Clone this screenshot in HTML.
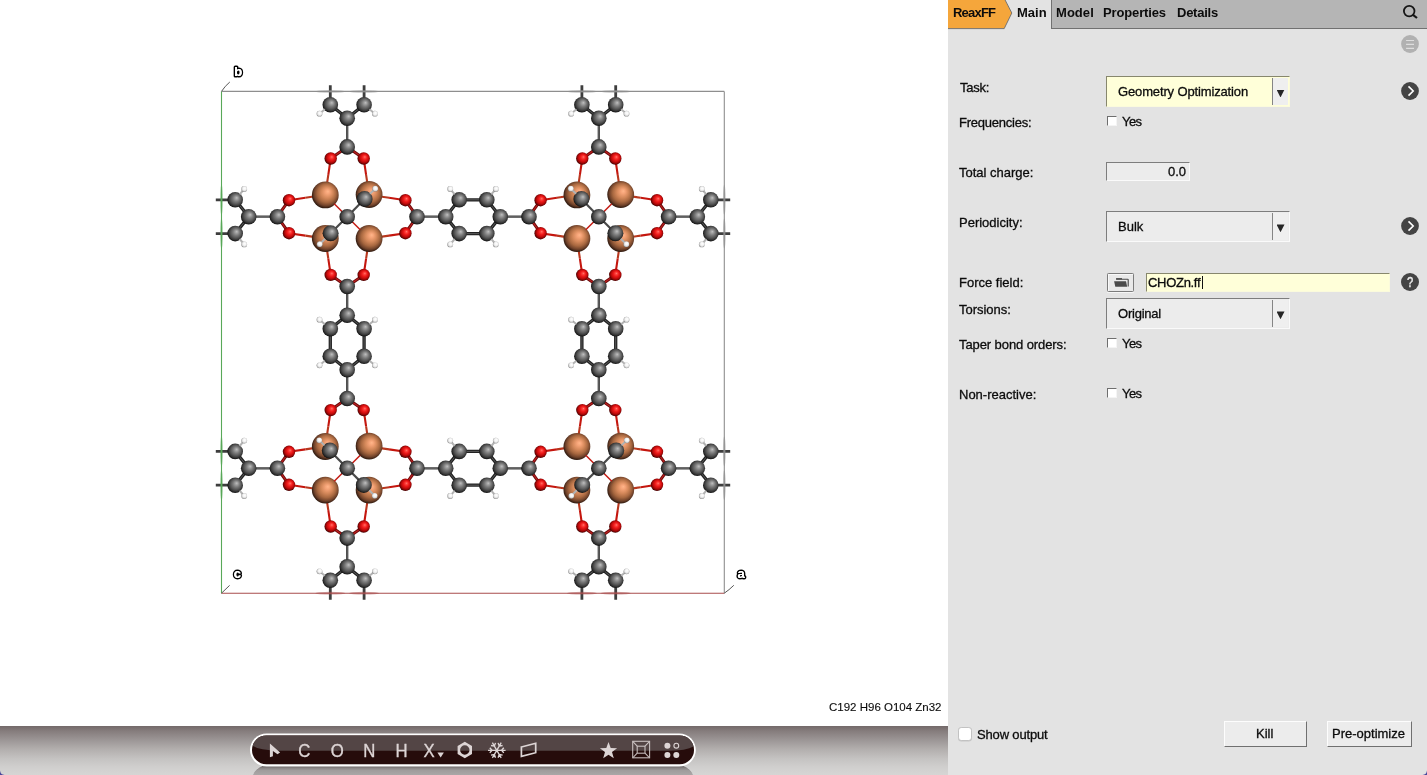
<!DOCTYPE html>
<html><head><meta charset="utf-8"><title>AMSinput</title>
<style>
*{box-sizing:border-box}
html,body{margin:0;padding:0}
body{width:1427px;height:775px;overflow:hidden;background:#fff;position:relative;font-family:"Liberation Sans",sans-serif;color:#111}
#viewer{position:absolute;left:0;top:0;width:948px;height:726px;background:#fff;overflow:hidden}
#bar{position:absolute;left:0;top:726px;width:948px;height:49px;background:linear-gradient(to bottom,#736969 0%,#857c7c 10%,#9b9595 28%,#b1adac 46%,#c4c2c1 66%,#d0cfce 84%,#d6d5d4 100%)}
#panel{position:absolute;left:948px;top:0;width:479px;height:775px;background:#e3e3e3}
.t{will-change:transform;position:absolute;white-space:nowrap;line-height:16px;height:16px;color:#0c0c0c}
.t{-webkit-text-stroke:0.3px #0c0c0c}
.b{font-weight:bold;-webkit-text-stroke:0}
.abs{position:absolute}
svg{will-change:transform}
.dd{position:absolute;border:1px solid;border-color:#7d7d7d #fafafa #fafafa #7d7d7d;background:#ececec}
.dd.y{background:#ffffd9;border-color:#87876d #fbfbdc #fbfbdc #87876d}
.dd .btn{position:absolute;right:1px;top:1px;bottom:1px;width:16px;background:#efefef;border-left:1px solid #858585}
.dd .btn:after{content:"";position:absolute;left:3.5px;top:11.3px;width:8px;height:7.8px;background:#262626;clip-path:polygon(0 0,100% 0,50% 100%)}
.cb{position:absolute;width:10px;height:10px;background:#fff;border:1px solid;border-color:#6e6e6e #f4f4f4 #f4f4f4 #6e6e6e}
.pb{position:absolute;background:#ececec;border:1px solid;border-color:#fdfdfd #707070 #707070 #fdfdfd}
</style></head>
<body>
<div id="viewer">
<svg width="948" height="726" viewBox="0 0 948 726" style="position:absolute;left:0;top:0">
<defs>
<radialGradient id="gZn" cx="0.525" cy="0.465" r="0.535" fx="0.60" fy="0.37"><stop offset="0" stop-color="#ffb68a"/><stop offset="0.15" stop-color="#f6a478"/><stop offset="0.4" stop-color="#d4885a"/><stop offset="0.65" stop-color="#a86840"/><stop offset="0.85" stop-color="#70422a"/><stop offset="1" stop-color="#2c180e"/></radialGradient>
<radialGradient id="gC" cx="0.525" cy="0.465" r="0.535" fx="0.60" fy="0.37"><stop offset="0" stop-color="#c0c0c0"/><stop offset="0.15" stop-color="#a4a4a4"/><stop offset="0.4" stop-color="#7a7a7a"/><stop offset="0.65" stop-color="#565656"/><stop offset="0.85" stop-color="#343434"/><stop offset="1" stop-color="#101010"/></radialGradient>
<radialGradient id="gO" cx="0.525" cy="0.465" r="0.535" fx="0.60" fy="0.37"><stop offset="0" stop-color="#ff7a74"/><stop offset="0.15" stop-color="#ff4640"/><stop offset="0.4" stop-color="#ee1a1a"/><stop offset="0.65" stop-color="#c60c0c"/><stop offset="0.85" stop-color="#8a0404"/><stop offset="1" stop-color="#3a0000"/></radialGradient>
<radialGradient id="gH" cx="0.525" cy="0.465" r="0.535" fx="0.60" fy="0.37"><stop offset="0" stop-color="#ffffff"/><stop offset="0.5" stop-color="#f4f4f4"/><stop offset="0.8" stop-color="#d0d0d0"/><stop offset="1" stop-color="#8a8a8a"/></radialGradient>
</defs>
<path d="M235.2 233.6L215.8 233.6M235.2 199.8L215.8 199.8M330.3 104.7L330.3 85.3M364.1 104.7L364.1 85.3M710.8 199.8L730.2 199.8M710.8 233.6L730.2 233.6M581.9 104.7L581.9 85.3M615.7 104.7L615.7 85.3M364.1 580.3L364.1 599.7M330.3 580.3L330.3 599.7M235.2 485.2L215.8 485.2M235.2 451.4L215.8 451.4M710.8 451.4L730.2 451.4M710.8 485.2L730.2 485.2M615.7 580.3L615.7 599.7M581.9 580.3L581.9 599.7" stroke="#3e3e3e" stroke-width="2.8" fill="none"/>
<g fill="none" stroke-width="1.1">
<path d="M221.5 91.4L724.3 91.4" stroke="#8e8e8e"/>
<path d="M724.3 91.4L724.3 593.2" stroke="#8e8e8e"/>
<path d="M221.5 91.4L221.5 593.2" stroke="#58a858"/>
<path d="M221.5 593.2L724.3 593.2" stroke="#a84c4c"/>
<ellipse cx="221.5" cy="233.6" rx="1.4" ry="15" fill="#58a858" opacity="0.5" stroke="none"/>
<ellipse cx="221.5" cy="199.8" rx="1.4" ry="15" fill="#58a858" opacity="0.5" stroke="none"/>
<ellipse cx="330.3" cy="91.4" rx="15" ry="1.4" fill="#8e8e8e" opacity="0.5" stroke="none"/>
<ellipse cx="364.1" cy="91.4" rx="15" ry="1.4" fill="#8e8e8e" opacity="0.5" stroke="none"/>
<ellipse cx="724.3" cy="199.8" rx="1.4" ry="15" fill="#8e8e8e" opacity="0.5" stroke="none"/>
<ellipse cx="724.3" cy="233.6" rx="1.4" ry="15" fill="#8e8e8e" opacity="0.5" stroke="none"/>
<ellipse cx="581.9" cy="91.4" rx="15" ry="1.4" fill="#8e8e8e" opacity="0.5" stroke="none"/>
<ellipse cx="615.7" cy="91.4" rx="15" ry="1.4" fill="#8e8e8e" opacity="0.5" stroke="none"/>
<ellipse cx="364.1" cy="593.2" rx="15" ry="1.4" fill="#a84c4c" opacity="0.5" stroke="none"/>
<ellipse cx="330.3" cy="593.2" rx="15" ry="1.4" fill="#a84c4c" opacity="0.5" stroke="none"/>
<ellipse cx="221.5" cy="485.2" rx="1.4" ry="15" fill="#58a858" opacity="0.5" stroke="none"/>
<ellipse cx="221.5" cy="451.4" rx="1.4" ry="15" fill="#58a858" opacity="0.5" stroke="none"/>
<ellipse cx="724.3" cy="451.4" rx="1.4" ry="15" fill="#8e8e8e" opacity="0.5" stroke="none"/>
<ellipse cx="724.3" cy="485.2" rx="1.4" ry="15" fill="#8e8e8e" opacity="0.5" stroke="none"/>
<ellipse cx="615.7" cy="593.2" rx="15" ry="1.4" fill="#a84c4c" opacity="0.5" stroke="none"/>
<ellipse cx="581.9" cy="593.2" rx="15" ry="1.4" fill="#a84c4c" opacity="0.5" stroke="none"/>
<path d="M221.5 91.4Q225 86 229.8 82M221.5 593.2L229.6 585.4M724.3 593.2Q729 590 733.8 585.3" stroke="#555" stroke-width="1"/>
</g>
<path d="M369.1 194.8L389.1 197.8M369.1 238.6L389.1 235.6M369.1 238.6L366.1 258.6M325.3 238.6L328.3 258.6M325.3 238.6L305.3 235.6M325.3 194.8L305.3 197.8M325.3 194.8L328.3 174.8M369.1 194.8L366.1 174.8M620.7 194.8L640.7 197.8M620.7 238.6L640.7 235.6M620.7 238.6L617.7 258.6M576.9 238.6L579.9 258.6M576.9 238.6L556.9 235.6M576.9 194.8L556.9 197.8M576.9 194.8L579.9 174.8M620.7 194.8L617.7 174.8M369.1 446.4L389.1 449.4M369.1 490.2L389.1 487.2M369.1 490.2L366.1 510.2M325.3 490.2L328.3 510.2M325.3 490.2L305.3 487.2M325.3 446.4L305.3 449.4M325.3 446.4L328.3 426.4M369.1 446.4L366.1 426.4M620.7 446.4L640.7 449.4M620.7 490.2L640.7 487.2M620.7 490.2L617.7 510.2M576.9 490.2L579.9 510.2M576.9 490.2L556.9 487.2M576.9 446.4L556.9 449.4M576.9 446.4L579.9 426.4M620.7 446.4L617.7 426.4" stroke="#b8381e" stroke-width="2.1" fill="none"/>
<path d="M389.1 197.8L405.4 200.2M389.1 235.6L405.4 233.2M366.1 258.6L363.7 274.9M328.3 258.6L330.7 274.9M305.3 235.6L289 233.2M305.3 197.8L289 200.2M328.3 174.8L330.7 158.5M366.1 174.8L363.7 158.5M640.7 197.8L657 200.2M640.7 235.6L657 233.2M617.7 258.6L615.3 274.9M579.9 258.6L582.3 274.9M556.9 235.6L540.6 233.2M556.9 197.8L540.6 200.2M579.9 174.8L582.3 158.5M617.7 174.8L615.3 158.5M389.1 449.4L405.4 451.8M389.1 487.2L405.4 484.8M366.1 510.2L363.7 526.5M328.3 510.2L330.7 526.5M305.3 487.2L289 484.8M305.3 449.4L289 451.8M328.3 426.4L330.7 410.1M366.1 426.4L363.7 410.1M640.7 449.4L657 451.8M640.7 487.2L657 484.8M617.7 510.2L615.3 526.5M579.9 510.2L582.3 526.5M556.9 487.2L540.6 484.8M556.9 449.4L540.6 451.8M579.9 426.4L582.3 410.1M617.7 426.4L615.3 410.1" stroke="#c4160e" stroke-width="2.1" fill="none"/>
<path d="M417 216.7L405.4 200.2M417 216.7L405.4 233.2M347.2 286.5L363.7 274.9M347.2 286.5L330.7 274.9M277.4 216.7L289 233.2M277.4 216.7L289 200.2M347.2 146.9L330.7 158.5M347.2 146.9L363.7 158.5M668.6 216.7L657 200.2M668.6 216.7L657 233.2M598.8 286.5L615.3 274.9M598.8 286.5L582.3 274.9M529 216.7L540.6 233.2M529 216.7L540.6 200.2M598.8 146.9L582.3 158.5M598.8 146.9L615.3 158.5M417 468.3L405.4 451.8M417 468.3L405.4 484.8M347.2 538.1L363.7 526.5M347.2 538.1L330.7 526.5M277.4 468.3L289 484.8M277.4 468.3L289 451.8M347.2 398.5L330.7 410.1M347.2 398.5L363.7 410.1M668.6 468.3L657 451.8M668.6 468.3L657 484.8M598.8 538.1L615.3 526.5M598.8 538.1L582.3 526.5M529 468.3L540.6 484.8M529 468.3L540.6 451.8M598.8 398.5L582.3 410.1M598.8 398.5L615.3 410.1" stroke="#6e0c0c" stroke-width="3" fill="none"/>
<path d="M417 216.7L405.4 200.2M417 216.7L405.4 233.2M347.2 286.5L363.7 274.9M347.2 286.5L330.7 274.9M277.4 216.7L289 233.2M277.4 216.7L289 200.2M347.2 146.9L330.7 158.5M347.2 146.9L363.7 158.5M668.6 216.7L657 200.2M668.6 216.7L657 233.2M598.8 286.5L615.3 274.9M598.8 286.5L582.3 274.9M529 216.7L540.6 233.2M529 216.7L540.6 200.2M598.8 146.9L582.3 158.5M598.8 146.9L615.3 158.5M417 468.3L405.4 451.8M417 468.3L405.4 484.8M347.2 538.1L363.7 526.5M347.2 538.1L330.7 526.5M277.4 468.3L289 484.8M277.4 468.3L289 451.8M347.2 398.5L330.7 410.1M347.2 398.5L363.7 410.1M668.6 468.3L657 451.8M668.6 468.3L657 484.8M598.8 538.1L615.3 526.5M598.8 538.1L582.3 526.5M529 468.3L540.6 484.8M529 468.3L540.6 451.8M598.8 398.5L582.3 410.1M598.8 398.5L615.3 410.1" stroke="#c02020" stroke-width="1.1" fill="none"/>
<path d="M417 216.7L445.7 216.7M347.2 286.5L347.2 315.2M277.4 216.7L248.7 216.7M347.2 146.9L347.2 118.2M668.6 216.7L697.3 216.7M598.8 286.5L598.8 315.2M529 216.7L500.3 216.7M598.8 146.9L598.8 118.2M417 468.3L445.7 468.3M347.2 538.1L347.2 566.8M277.4 468.3L248.7 468.3M347.2 398.5L347.2 369.8M668.6 468.3L697.3 468.3M598.8 538.1L598.8 566.8M529 468.3L500.3 468.3M598.8 398.5L598.8 369.8" stroke="#3c3c3c" stroke-width="2.3" fill="none"/>
<path d="M417 216.7L445.7 216.7M347.2 286.5L347.2 315.2M277.4 216.7L248.7 216.7M347.2 146.9L347.2 118.2M668.6 216.7L697.3 216.7M598.8 286.5L598.8 315.2M529 216.7L500.3 216.7M598.8 146.9L598.8 118.2M417 468.3L445.7 468.3M347.2 538.1L347.2 566.8M277.4 468.3L248.7 468.3M347.2 398.5L347.2 369.8M668.6 468.3L697.3 468.3M598.8 538.1L598.8 566.8M529 468.3L500.3 468.3M598.8 398.5L598.8 369.8" stroke="#6e6e6e" stroke-width="0.9" fill="none"/>
<path d="M445.7 216.7L459.2 199.8M445.7 216.7L459.2 233.6M459.2 199.8L486.8 199.8M459.2 233.6L486.8 233.6M347.2 315.2L364.1 328.7M347.2 315.2L330.3 328.7M364.1 328.7L364.1 356.3M330.3 328.7L330.3 356.3M248.7 216.7L235.2 233.6M248.7 216.7L235.2 199.8M347.2 118.2L330.3 104.7M347.2 118.2L364.1 104.7M697.3 216.7L710.8 199.8M697.3 216.7L710.8 233.6M598.8 315.2L615.7 328.7M598.8 315.2L581.9 328.7M615.7 328.7L615.7 356.3M581.9 328.7L581.9 356.3M500.3 216.7L486.8 233.6M500.3 216.7L486.8 199.8M598.8 118.2L581.9 104.7M598.8 118.2L615.7 104.7M445.7 468.3L459.2 451.4M445.7 468.3L459.2 485.2M459.2 451.4L486.8 451.4M459.2 485.2L486.8 485.2M347.2 566.8L364.1 580.3M347.2 566.8L330.3 580.3M248.7 468.3L235.2 485.2M248.7 468.3L235.2 451.4M347.2 369.8L330.3 356.3M347.2 369.8L364.1 356.3M697.3 468.3L710.8 451.4M697.3 468.3L710.8 485.2M598.8 566.8L615.7 580.3M598.8 566.8L581.9 580.3M500.3 468.3L486.8 485.2M500.3 468.3L486.8 451.4M598.8 369.8L581.9 356.3M598.8 369.8L615.7 356.3" stroke="#222222" stroke-width="3.3" fill="none"/>
<path d="M445.7 216.7L459.2 199.8M445.7 216.7L459.2 233.6M459.2 199.8L486.8 199.8M459.2 233.6L486.8 233.6M347.2 315.2L364.1 328.7M347.2 315.2L330.3 328.7M364.1 328.7L364.1 356.3M330.3 328.7L330.3 356.3M248.7 216.7L235.2 233.6M248.7 216.7L235.2 199.8M347.2 118.2L330.3 104.7M347.2 118.2L364.1 104.7M697.3 216.7L710.8 199.8M697.3 216.7L710.8 233.6M598.8 315.2L615.7 328.7M598.8 315.2L581.9 328.7M615.7 328.7L615.7 356.3M581.9 328.7L581.9 356.3M500.3 216.7L486.8 233.6M500.3 216.7L486.8 199.8M598.8 118.2L581.9 104.7M598.8 118.2L615.7 104.7M445.7 468.3L459.2 451.4M445.7 468.3L459.2 485.2M459.2 451.4L486.8 451.4M459.2 485.2L486.8 485.2M347.2 566.8L364.1 580.3M347.2 566.8L330.3 580.3M248.7 468.3L235.2 485.2M248.7 468.3L235.2 451.4M347.2 369.8L330.3 356.3M347.2 369.8L364.1 356.3M697.3 468.3L710.8 451.4M697.3 468.3L710.8 485.2M598.8 566.8L615.7 580.3M598.8 566.8L581.9 580.3M500.3 468.3L486.8 485.2M500.3 468.3L486.8 451.4M598.8 369.8L581.9 356.3M598.8 369.8L615.7 356.3" stroke="#5a5a5a" stroke-width="1" fill="none"/>
<circle cx="325.3" cy="194.9" r="13.4" fill="url(#gZn)"/>
<circle cx="369.1" cy="194.5" r="13.4" fill="url(#gZn)"/>
<circle cx="325.3" cy="238.5" r="13.4" fill="url(#gZn)"/>
<circle cx="369.1" cy="238.5" r="13.4" fill="url(#gZn)"/>
<circle cx="576.9" cy="194.9" r="13.4" fill="url(#gZn)"/>
<circle cx="620.7" cy="194.5" r="13.4" fill="url(#gZn)"/>
<circle cx="576.9" cy="238.5" r="13.4" fill="url(#gZn)"/>
<circle cx="620.7" cy="238.5" r="13.4" fill="url(#gZn)"/>
<circle cx="325.3" cy="446.5" r="13.4" fill="url(#gZn)"/>
<circle cx="369.1" cy="446.1" r="13.4" fill="url(#gZn)"/>
<circle cx="325.3" cy="490.1" r="13.4" fill="url(#gZn)"/>
<circle cx="369.1" cy="490.1" r="13.4" fill="url(#gZn)"/>
<circle cx="576.9" cy="446.5" r="13.4" fill="url(#gZn)"/>
<circle cx="620.7" cy="446.1" r="13.4" fill="url(#gZn)"/>
<circle cx="576.9" cy="490.1" r="13.4" fill="url(#gZn)"/>
<circle cx="620.7" cy="490.1" r="13.4" fill="url(#gZn)"/>
<circle cx="405.4" cy="200.2" r="6.2" fill="url(#gO)"/>
<circle cx="405.4" cy="233.2" r="6.2" fill="url(#gO)"/>
<circle cx="363.7" cy="274.9" r="6.2" fill="url(#gO)"/>
<circle cx="330.7" cy="274.9" r="6.2" fill="url(#gO)"/>
<circle cx="289" cy="233.2" r="6.2" fill="url(#gO)"/>
<circle cx="289" cy="200.2" r="6.2" fill="url(#gO)"/>
<circle cx="330.7" cy="158.5" r="6.2" fill="url(#gO)"/>
<circle cx="363.7" cy="158.5" r="6.2" fill="url(#gO)"/>
<circle cx="657" cy="200.2" r="6.2" fill="url(#gO)"/>
<circle cx="657" cy="233.2" r="6.2" fill="url(#gO)"/>
<circle cx="615.3" cy="274.9" r="6.2" fill="url(#gO)"/>
<circle cx="582.3" cy="274.9" r="6.2" fill="url(#gO)"/>
<circle cx="540.6" cy="233.2" r="6.2" fill="url(#gO)"/>
<circle cx="540.6" cy="200.2" r="6.2" fill="url(#gO)"/>
<circle cx="582.3" cy="158.5" r="6.2" fill="url(#gO)"/>
<circle cx="615.3" cy="158.5" r="6.2" fill="url(#gO)"/>
<circle cx="405.4" cy="451.8" r="6.2" fill="url(#gO)"/>
<circle cx="405.4" cy="484.8" r="6.2" fill="url(#gO)"/>
<circle cx="363.7" cy="526.5" r="6.2" fill="url(#gO)"/>
<circle cx="330.7" cy="526.5" r="6.2" fill="url(#gO)"/>
<circle cx="289" cy="484.8" r="6.2" fill="url(#gO)"/>
<circle cx="289" cy="451.8" r="6.2" fill="url(#gO)"/>
<circle cx="330.7" cy="410.1" r="6.2" fill="url(#gO)"/>
<circle cx="363.7" cy="410.1" r="6.2" fill="url(#gO)"/>
<circle cx="657" cy="451.8" r="6.2" fill="url(#gO)"/>
<circle cx="657" cy="484.8" r="6.2" fill="url(#gO)"/>
<circle cx="615.3" cy="526.5" r="6.2" fill="url(#gO)"/>
<circle cx="582.3" cy="526.5" r="6.2" fill="url(#gO)"/>
<circle cx="540.6" cy="484.8" r="6.2" fill="url(#gO)"/>
<circle cx="540.6" cy="451.8" r="6.2" fill="url(#gO)"/>
<circle cx="582.3" cy="410.1" r="6.2" fill="url(#gO)"/>
<circle cx="615.3" cy="410.1" r="6.2" fill="url(#gO)"/>
<circle cx="417" cy="216.7" r="7.8" fill="url(#gC)"/>
<circle cx="445.7" cy="216.7" r="7.8" fill="url(#gC)"/>
<circle cx="459.2" cy="199.8" r="7.8" fill="url(#gC)"/>
<circle cx="459.2" cy="233.6" r="7.8" fill="url(#gC)"/>
<circle cx="347.2" cy="286.5" r="7.8" fill="url(#gC)"/>
<circle cx="347.2" cy="315.2" r="7.8" fill="url(#gC)"/>
<circle cx="364.1" cy="328.7" r="7.8" fill="url(#gC)"/>
<circle cx="330.3" cy="328.7" r="7.8" fill="url(#gC)"/>
<circle cx="277.4" cy="216.7" r="7.8" fill="url(#gC)"/>
<circle cx="248.7" cy="216.7" r="7.8" fill="url(#gC)"/>
<circle cx="235.2" cy="233.6" r="7.8" fill="url(#gC)"/>
<circle cx="235.2" cy="199.8" r="7.8" fill="url(#gC)"/>
<circle cx="347.2" cy="146.9" r="7.8" fill="url(#gC)"/>
<circle cx="347.2" cy="118.2" r="7.8" fill="url(#gC)"/>
<circle cx="330.3" cy="104.7" r="7.8" fill="url(#gC)"/>
<circle cx="364.1" cy="104.7" r="7.8" fill="url(#gC)"/>
<circle cx="668.6" cy="216.7" r="7.8" fill="url(#gC)"/>
<circle cx="697.3" cy="216.7" r="7.8" fill="url(#gC)"/>
<circle cx="710.8" cy="199.8" r="7.8" fill="url(#gC)"/>
<circle cx="710.8" cy="233.6" r="7.8" fill="url(#gC)"/>
<circle cx="598.8" cy="286.5" r="7.8" fill="url(#gC)"/>
<circle cx="598.8" cy="315.2" r="7.8" fill="url(#gC)"/>
<circle cx="615.7" cy="328.7" r="7.8" fill="url(#gC)"/>
<circle cx="581.9" cy="328.7" r="7.8" fill="url(#gC)"/>
<circle cx="529" cy="216.7" r="7.8" fill="url(#gC)"/>
<circle cx="500.3" cy="216.7" r="7.8" fill="url(#gC)"/>
<circle cx="486.8" cy="233.6" r="7.8" fill="url(#gC)"/>
<circle cx="486.8" cy="199.8" r="7.8" fill="url(#gC)"/>
<circle cx="598.8" cy="146.9" r="7.8" fill="url(#gC)"/>
<circle cx="598.8" cy="118.2" r="7.8" fill="url(#gC)"/>
<circle cx="581.9" cy="104.7" r="7.8" fill="url(#gC)"/>
<circle cx="615.7" cy="104.7" r="7.8" fill="url(#gC)"/>
<circle cx="417" cy="468.3" r="7.8" fill="url(#gC)"/>
<circle cx="445.7" cy="468.3" r="7.8" fill="url(#gC)"/>
<circle cx="459.2" cy="451.4" r="7.8" fill="url(#gC)"/>
<circle cx="459.2" cy="485.2" r="7.8" fill="url(#gC)"/>
<circle cx="347.2" cy="538.1" r="7.8" fill="url(#gC)"/>
<circle cx="347.2" cy="566.8" r="7.8" fill="url(#gC)"/>
<circle cx="364.1" cy="580.3" r="7.8" fill="url(#gC)"/>
<circle cx="330.3" cy="580.3" r="7.8" fill="url(#gC)"/>
<circle cx="277.4" cy="468.3" r="7.8" fill="url(#gC)"/>
<circle cx="248.7" cy="468.3" r="7.8" fill="url(#gC)"/>
<circle cx="235.2" cy="485.2" r="7.8" fill="url(#gC)"/>
<circle cx="235.2" cy="451.4" r="7.8" fill="url(#gC)"/>
<circle cx="347.2" cy="398.5" r="7.8" fill="url(#gC)"/>
<circle cx="347.2" cy="369.8" r="7.8" fill="url(#gC)"/>
<circle cx="330.3" cy="356.3" r="7.8" fill="url(#gC)"/>
<circle cx="364.1" cy="356.3" r="7.8" fill="url(#gC)"/>
<circle cx="668.6" cy="468.3" r="7.8" fill="url(#gC)"/>
<circle cx="697.3" cy="468.3" r="7.8" fill="url(#gC)"/>
<circle cx="710.8" cy="451.4" r="7.8" fill="url(#gC)"/>
<circle cx="710.8" cy="485.2" r="7.8" fill="url(#gC)"/>
<circle cx="598.8" cy="538.1" r="7.8" fill="url(#gC)"/>
<circle cx="598.8" cy="566.8" r="7.8" fill="url(#gC)"/>
<circle cx="615.7" cy="580.3" r="7.8" fill="url(#gC)"/>
<circle cx="581.9" cy="580.3" r="7.8" fill="url(#gC)"/>
<circle cx="529" cy="468.3" r="7.8" fill="url(#gC)"/>
<circle cx="500.3" cy="468.3" r="7.8" fill="url(#gC)"/>
<circle cx="486.8" cy="485.2" r="7.8" fill="url(#gC)"/>
<circle cx="486.8" cy="451.4" r="7.8" fill="url(#gC)"/>
<circle cx="598.8" cy="398.5" r="7.8" fill="url(#gC)"/>
<circle cx="598.8" cy="369.8" r="7.8" fill="url(#gC)"/>
<circle cx="581.9" cy="356.3" r="7.8" fill="url(#gC)"/>
<circle cx="615.7" cy="356.3" r="7.8" fill="url(#gC)"/>
<path d="M454.7 194.4L450.2 189" stroke="#b2b2b2" stroke-width="2"/>
<path d="M454.7 239L450.2 244.4" stroke="#b2b2b2" stroke-width="2"/>
<circle cx="450.2" cy="189" r="2.9" fill="url(#gH)"/>
<circle cx="450.2" cy="244.4" r="2.9" fill="url(#gH)"/>
<path d="M369.5 324.2L374.9 319.7" stroke="#b2b2b2" stroke-width="2"/>
<path d="M324.9 324.2L319.5 319.7" stroke="#b2b2b2" stroke-width="2"/>
<circle cx="374.9" cy="319.7" r="2.9" fill="url(#gH)"/>
<circle cx="319.5" cy="319.7" r="2.9" fill="url(#gH)"/>
<path d="M239.7 239L244.2 244.4" stroke="#b2b2b2" stroke-width="2"/>
<path d="M239.7 194.4L244.2 189" stroke="#b2b2b2" stroke-width="2"/>
<circle cx="244.2" cy="244.4" r="2.9" fill="url(#gH)"/>
<circle cx="244.2" cy="189" r="2.9" fill="url(#gH)"/>
<path d="M324.9 109.2L319.5 113.7" stroke="#b2b2b2" stroke-width="2"/>
<path d="M369.5 109.2L374.9 113.7" stroke="#b2b2b2" stroke-width="2"/>
<circle cx="319.5" cy="113.7" r="2.9" fill="url(#gH)"/>
<circle cx="374.9" cy="113.7" r="2.9" fill="url(#gH)"/>
<path d="M347.2 216.7L334.2 203.7" stroke="#c41c14" stroke-width="1.5"/>
<path d="M347.2 216.7L360.2 229.7" stroke="#c41c14" stroke-width="1.5"/>
<path d="M347.2 216.7L364.6 198.9" stroke="#4a4a4a" stroke-width="2.2"/>
<path d="M347.2 216.7L330.6 233.3" stroke="#4a4a4a" stroke-width="2.2"/>
<circle cx="347.2" cy="216.7" r="7.8" fill="url(#gC)"/>
<circle cx="364.6" cy="198.9" r="8.0" fill="url(#gC)"/>
<circle cx="330.6" cy="233.3" r="8.0" fill="url(#gC)"/>
<path d="M369.9 193.8L375.2 188.7" stroke="#b2b2b2" stroke-width="2"/>
<path d="M325.1 238.8L319.7 244.2" stroke="#b2b2b2" stroke-width="2"/>
<circle cx="375.2" cy="188.7" r="2.9" fill="url(#gH)"/>
<circle cx="319.7" cy="244.2" r="2.9" fill="url(#gH)"/>
<path d="M706.3 194.4L701.8 189" stroke="#b2b2b2" stroke-width="2"/>
<path d="M706.3 239L701.8 244.4" stroke="#b2b2b2" stroke-width="2"/>
<circle cx="701.8" cy="189" r="2.9" fill="url(#gH)"/>
<circle cx="701.8" cy="244.4" r="2.9" fill="url(#gH)"/>
<path d="M621.1 324.2L626.5 319.7" stroke="#b2b2b2" stroke-width="2"/>
<path d="M576.5 324.2L571.1 319.7" stroke="#b2b2b2" stroke-width="2"/>
<circle cx="626.5" cy="319.7" r="2.9" fill="url(#gH)"/>
<circle cx="571.1" cy="319.7" r="2.9" fill="url(#gH)"/>
<path d="M491.3 239L495.8 244.4" stroke="#b2b2b2" stroke-width="2"/>
<path d="M491.3 194.4L495.8 189" stroke="#b2b2b2" stroke-width="2"/>
<circle cx="495.8" cy="244.4" r="2.9" fill="url(#gH)"/>
<circle cx="495.8" cy="189" r="2.9" fill="url(#gH)"/>
<path d="M576.5 109.2L571.1 113.7" stroke="#b2b2b2" stroke-width="2"/>
<path d="M621.1 109.2L626.5 113.7" stroke="#b2b2b2" stroke-width="2"/>
<circle cx="571.1" cy="113.7" r="2.9" fill="url(#gH)"/>
<circle cx="626.5" cy="113.7" r="2.9" fill="url(#gH)"/>
<path d="M598.8 216.7L611.8 203.7" stroke="#c41c14" stroke-width="1.5"/>
<path d="M598.8 216.7L585.8 229.7" stroke="#c41c14" stroke-width="1.5"/>
<path d="M598.8 216.7L581.4 198.9" stroke="#4a4a4a" stroke-width="2.2"/>
<path d="M598.8 216.7L615.4 233.3" stroke="#4a4a4a" stroke-width="2.2"/>
<circle cx="598.8" cy="216.7" r="7.8" fill="url(#gC)"/>
<circle cx="581.4" cy="198.9" r="8.0" fill="url(#gC)"/>
<circle cx="615.4" cy="233.3" r="8.0" fill="url(#gC)"/>
<path d="M576.1 193.8L570.8 188.7" stroke="#b2b2b2" stroke-width="2"/>
<path d="M620.8 238.8L626.3 244.2" stroke="#b2b2b2" stroke-width="2"/>
<circle cx="570.8" cy="188.7" r="2.9" fill="url(#gH)"/>
<circle cx="626.3" cy="244.2" r="2.9" fill="url(#gH)"/>
<path d="M454.7 446L450.2 440.6" stroke="#b2b2b2" stroke-width="2"/>
<path d="M454.7 490.6L450.2 496" stroke="#b2b2b2" stroke-width="2"/>
<circle cx="450.2" cy="440.6" r="2.9" fill="url(#gH)"/>
<circle cx="450.2" cy="496" r="2.9" fill="url(#gH)"/>
<path d="M369.5 575.8L374.9 571.3" stroke="#b2b2b2" stroke-width="2"/>
<path d="M324.9 575.8L319.5 571.3" stroke="#b2b2b2" stroke-width="2"/>
<circle cx="374.9" cy="571.3" r="2.9" fill="url(#gH)"/>
<circle cx="319.5" cy="571.3" r="2.9" fill="url(#gH)"/>
<path d="M239.7 490.6L244.2 496" stroke="#b2b2b2" stroke-width="2"/>
<path d="M239.7 446L244.2 440.6" stroke="#b2b2b2" stroke-width="2"/>
<circle cx="244.2" cy="496" r="2.9" fill="url(#gH)"/>
<circle cx="244.2" cy="440.6" r="2.9" fill="url(#gH)"/>
<path d="M324.9 360.8L319.5 365.3" stroke="#b2b2b2" stroke-width="2"/>
<path d="M369.5 360.8L374.9 365.3" stroke="#b2b2b2" stroke-width="2"/>
<circle cx="319.5" cy="365.3" r="2.9" fill="url(#gH)"/>
<circle cx="374.9" cy="365.3" r="2.9" fill="url(#gH)"/>
<path d="M347.2 468.3L360.2 455.3" stroke="#c41c14" stroke-width="1.5"/>
<path d="M347.2 468.3L334.2 481.3" stroke="#c41c14" stroke-width="1.5"/>
<path d="M347.2 468.3L329.8 450.5" stroke="#4a4a4a" stroke-width="2.2"/>
<path d="M347.2 468.3L363.8 484.9" stroke="#4a4a4a" stroke-width="2.2"/>
<circle cx="347.2" cy="468.3" r="7.8" fill="url(#gC)"/>
<circle cx="329.8" cy="450.5" r="8.0" fill="url(#gC)"/>
<circle cx="363.8" cy="484.9" r="8.0" fill="url(#gC)"/>
<path d="M324.5 445.4L319.2 440.3" stroke="#b2b2b2" stroke-width="2"/>
<path d="M369.2 490.3L374.7 495.8" stroke="#b2b2b2" stroke-width="2"/>
<circle cx="319.2" cy="440.3" r="2.9" fill="url(#gH)"/>
<circle cx="374.7" cy="495.8" r="2.9" fill="url(#gH)"/>
<path d="M706.3 446L701.8 440.6" stroke="#b2b2b2" stroke-width="2"/>
<path d="M706.3 490.6L701.8 496" stroke="#b2b2b2" stroke-width="2"/>
<circle cx="701.8" cy="440.6" r="2.9" fill="url(#gH)"/>
<circle cx="701.8" cy="496" r="2.9" fill="url(#gH)"/>
<path d="M621.1 575.8L626.5 571.3" stroke="#b2b2b2" stroke-width="2"/>
<path d="M576.5 575.8L571.1 571.3" stroke="#b2b2b2" stroke-width="2"/>
<circle cx="626.5" cy="571.3" r="2.9" fill="url(#gH)"/>
<circle cx="571.1" cy="571.3" r="2.9" fill="url(#gH)"/>
<path d="M491.3 490.6L495.8 496" stroke="#b2b2b2" stroke-width="2"/>
<path d="M491.3 446L495.8 440.6" stroke="#b2b2b2" stroke-width="2"/>
<circle cx="495.8" cy="496" r="2.9" fill="url(#gH)"/>
<circle cx="495.8" cy="440.6" r="2.9" fill="url(#gH)"/>
<path d="M576.5 360.8L571.1 365.3" stroke="#b2b2b2" stroke-width="2"/>
<path d="M621.1 360.8L626.5 365.3" stroke="#b2b2b2" stroke-width="2"/>
<circle cx="571.1" cy="365.3" r="2.9" fill="url(#gH)"/>
<circle cx="626.5" cy="365.3" r="2.9" fill="url(#gH)"/>
<path d="M598.8 468.3L585.8 455.3" stroke="#c41c14" stroke-width="1.5"/>
<path d="M598.8 468.3L611.8 481.3" stroke="#c41c14" stroke-width="1.5"/>
<path d="M598.8 468.3L616.2 450.5" stroke="#4a4a4a" stroke-width="2.2"/>
<path d="M598.8 468.3L582.2 484.9" stroke="#4a4a4a" stroke-width="2.2"/>
<circle cx="598.8" cy="468.3" r="7.8" fill="url(#gC)"/>
<circle cx="616.2" cy="450.5" r="8.0" fill="url(#gC)"/>
<circle cx="582.2" cy="484.9" r="8.0" fill="url(#gC)"/>
<path d="M621.5 445.4L626.8 440.3" stroke="#b2b2b2" stroke-width="2"/>
<path d="M576.8 490.3L571.3 495.8" stroke="#b2b2b2" stroke-width="2"/>
<circle cx="626.8" cy="440.3" r="2.9" fill="url(#gH)"/>
<circle cx="571.3" cy="495.8" r="2.9" fill="url(#gH)"/>
<text x="238.2" y="75.6" text-anchor="middle" font-family="Liberation Sans, sans-serif" font-weight="bold" font-size="13" fill="#fff" stroke="#000" stroke-width="3" stroke-linejoin="round" paint-order="stroke">b</text>
<text x="238.2" y="75.6" text-anchor="middle" font-family="Liberation Sans, sans-serif" font-weight="bold" font-size="13" fill="#fff">b</text>
<text x="237.4" y="578.4" text-anchor="middle" font-family="Liberation Sans, sans-serif" font-weight="bold" font-size="13" fill="#fff" stroke="#000" stroke-width="3" stroke-linejoin="round" paint-order="stroke">c</text>
<text x="237.4" y="578.4" text-anchor="middle" font-family="Liberation Sans, sans-serif" font-weight="bold" font-size="13" fill="#fff">c</text>
<text x="741.2" y="578.4" text-anchor="middle" font-family="Liberation Sans, sans-serif" font-weight="bold" font-size="13" fill="#fff" stroke="#000" stroke-width="3" stroke-linejoin="round" paint-order="stroke">a</text>
<text x="741.2" y="578.4" text-anchor="middle" font-family="Liberation Sans, sans-serif" font-weight="bold" font-size="13" fill="#fff">a</text>
</svg>
<div class="t  k_formula" style="left:829.10px;top:699.00px;font-size:11.5px;-webkit-text-stroke:0.12px #0c0c0c;">C192 H96 O104 Zn32</div>
</div>
<div id="bar">
<svg class="abs" style="position:absolute;left:0;top:0" width="948" height="49" viewBox="0 726 948 49">
<defs>
<clipPath id="pill"><rect x="252" y="735.6" width="442" height="28.6" rx="14.3"/></clipPath>
<linearGradient id="refl" gradientUnits="userSpaceOnUse" x1="0" y1="766" x2="0" y2="775"><stop offset="0" stop-color="#625c5c"/><stop offset="0.22" stop-color="#8a8585"/><stop offset="0.5" stop-color="#a09c9c"/><stop offset="1" stop-color="#aaa7a7"/></linearGradient>
</defs>
<path d="M252.6 775Q254.5 768.5 264 765H682Q691.5 768.5 693.4 775Z" fill="url(#refl)"/>
<path d="M252.6 775Q254.5 768.5 264 765M682 765Q691.5 768.5 693.4 775" fill="none" stroke="#dcdcdc" stroke-width="1" opacity="0.7"/>
<rect x="250" y="733.4" width="445.8" height="33.2" rx="16.6" fill="#ffffff"/>
<g clip-path="url(#pill)">
<rect x="250" y="733" width="447" height="35" fill="#260c0b"/>
<path d="M250 733H697V744Q690 750.7 668 750.7H279Q257 750.7 250 744Z" fill="#534545"/>
</g>
<path d="M269.9 743.5L280.1 752.4L277.5 754.3L272.9 750.9L272.9 756.2L269.9 757.2Z" fill="#ddd5d5"/>
<text transform="translate(304.3 757) scale(0.9 1)" text-anchor="middle" font-family="Liberation Sans, sans-serif" font-size="18.6" fill="#ddd5d5" stroke="#ddd5d5" stroke-width="0.35">C</text>
<text transform="translate(337.3 757) scale(0.9 1)" text-anchor="middle" font-family="Liberation Sans, sans-serif" font-size="18.6" fill="#ddd5d5" stroke="#ddd5d5" stroke-width="0.35">O</text>
<text transform="translate(369.2 757) scale(0.9 1)" text-anchor="middle" font-family="Liberation Sans, sans-serif" font-size="18.6" fill="#ddd5d5" stroke="#ddd5d5" stroke-width="0.35">N</text>
<text transform="translate(401.6 757) scale(0.9 1)" text-anchor="middle" font-family="Liberation Sans, sans-serif" font-size="18.6" fill="#ddd5d5" stroke="#ddd5d5" stroke-width="0.35">H</text>
<text transform="translate(429.1 757) scale(0.9 1)" text-anchor="middle" font-family="Liberation Sans, sans-serif" font-size="18.6" fill="#ddd5d5" stroke="#ddd5d5" stroke-width="0.35">X</text>
<path d="M437.4 752.4H443.9L440.65 757.5Z" fill="#ddd5d5"/>
<path fill-rule="evenodd" d="M464.8 741.7L472.0 745.9L472.0 754.1L464.8 758.3L457.6 754.1L457.6 745.9Z M460.1 750.0a4.7 4.7 0 1 0 9.4 0a4.7 4.7 0 1 0 -9.4 0Z" fill="#ddd5d5"/>
<path d="M496.8 750.3L505.6 750.3M501.6 750.3L503.8 747.7M501.6 750.3L503.8 752.9M496.8 750.3L501.2 757.9M499.2 754.5L502.6 755.1M499.2 754.5L498.1 757.7M496.8 750.3L492.4 757.9M494.4 754.5L495.5 757.7M494.4 754.5L491.0 755.1M496.8 750.3L488.0 750.3M492.0 750.3L489.8 752.9M492.0 750.3L489.8 747.7M496.8 750.3L492.4 742.7M494.4 746.1L491.0 745.5M494.4 746.1L495.5 742.9M496.8 750.3L501.2 742.7M499.2 746.1L498.1 742.9M499.2 746.1L502.6 745.5" stroke="#ddd5d5" stroke-width="1.35" fill="none"/>
<path d="M521.4 747L535.7 743.3V752.7L521.4 756.4Z" fill="none" stroke="#ddd5d5" stroke-width="1.7"/>
<path d="M608.5 742.0L610.7 748.0L617.1 748.2L612.0 752.1L613.8 758.3L608.5 754.7L603.2 758.3L605.0 752.1L599.9 748.2L606.3 748.0Z" fill="#ddd5d5"/>
<g fill="none" stroke="#ddd5d5" stroke-width="1.1" opacity="0.85"><rect x="632.7" y="741.3" width="16.9" height="16.5"/><rect x="637.2" y="746.2" width="7.8" height="7"/><path d="M632.7 741.3L637.2 746.2M649.6 741.3L645 746.2M632.7 757.8L637.2 753.2M649.6 757.8L645 753.2"/></g>
<circle cx="667.4" cy="745.7" r="3" fill="#ddd5d5"/><circle cx="667.4" cy="754.9" r="3" fill="#ddd5d5"/><circle cx="676.3" cy="754.9" r="3" fill="#ddd5d5"/><circle cx="676.3" cy="745.7" r="2.4" fill="none" stroke="#ddd5d5" stroke-width="1.1"/>
</svg>
<svg class="abs" style="position:absolute;left:0;top:39px" width="10" height="10" viewBox="0 0 10 10"><path d="M0 5.5Q0.4 9.6 4.5 10H0Z" fill="#4b4a9c"/></svg>
</div>
<div id="panel">
<div class="abs" style="left:103px;top:0;width:376px;height:29px;background:#b5b5b5;border-bottom:1px solid #717171;border-left:1px solid #717171"></div>
<div class="abs" style="left:0;top:0;width:103px;height:29px;background:#e3e3e3"></div>
<svg class="abs" style="left:0;top:0" width="70" height="30" viewBox="0 0 70 30"><path d="M0 -1H56.6L63.8 13L56.2 28.6H0Z" fill="#f5a63b"/><path d="M0 28.6H56.2L63.8 13L56.6 -1" fill="none" stroke="#6b6b6b" stroke-width="0.9"/></svg>
<div class="t b k_reax" style="left:4.90px;top:5.00px;font-size:13px;letter-spacing:-0.780px;">ReaxFF</div>
<div class="t b k_main" style="left:69.20px;top:5.00px;font-size:13px;">Main</div>
<div class="t b k_model" style="left:108.10px;top:5.00px;font-size:13px;letter-spacing:0.050px;">Model</div>
<div class="t b k_props" style="left:155.40px;top:5.00px;font-size:13px;letter-spacing:-0.133px;">Properties</div>
<div class="t b k_details" style="left:229.40px;top:5.00px;font-size:13px;letter-spacing:-0.250px;">Details</div>
<svg class="abs" style="left:449px;top:0" width="30" height="28" viewBox="0 0 30 28"><circle cx="12.2" cy="11.1" r="5.3" fill="none" stroke="#161616" stroke-width="1.8"/><path d="M15.7 14.6L20 18" stroke="#161616" stroke-width="2.2" stroke-linecap="butt"/></svg>
<svg class="abs" style="left:452px;top:34px" width="20" height="20" viewBox="0 0 20 20"><circle cx="10" cy="10" r="8.9" fill="#b1b1b1"/><path d="M6.1 6.5H14M6.1 10.3H14M6.1 14.4H14" stroke="#dedede" stroke-width="1.2"/></svg>
<div class="t  k_task" style="left:11.70px;top:80.00px;font-size:13px;letter-spacing:-0.275px;">Task:</div>
<div class="t  k_freq" style="left:11.20px;top:115.00px;font-size:13px;letter-spacing:-0.227px;">Frequencies:</div>
<div class="t  k_charge" style="left:10.90px;top:165.00px;font-size:13px;">Total charge:</div>
<div class="t  k_period" style="left:10.90px;top:215.00px;font-size:13px;">Periodicity:</div>
<div class="t  k_ff" style="left:10.90px;top:275.00px;font-size:13px;">Force field:</div>
<div class="t  k_tors" style="left:11.30px;top:302.00px;font-size:13px;letter-spacing:-0.026px;">Torsions:</div>
<div class="t  k_taper" style="left:11.30px;top:337.00px;font-size:13px;letter-spacing:-0.088px;">Taper bond orders:</div>
<div class="t  k_nonr" style="left:11.20px;top:387.00px;font-size:13px;">Non-reactive:</div>
<div class="dd y" style="left:158px;top:76.3px;width:184px;height:30.400000000000006px"><div class="btn"></div></div><div class="t  k_geo" style="left:169.90px;top:84.00px;font-size:13px;letter-spacing:-0.140px;">Geometry Optimization</div>
<div class="dd" style="left:158px;top:211.2px;width:184px;height:30.600000000000023px"><div class="btn"></div></div><div class="t  k_bulk" style="left:169.90px;top:219.00px;font-size:13px;">Bulk</div>
<div class="dd" style="left:158px;top:298.2px;width:184px;height:30.400000000000034px"><div class="btn"></div></div><div class="t  k_orig" style="left:169.90px;top:306.00px;font-size:13px;letter-spacing:-0.230px;">Original</div>
<div class="dd" style="left:158px;top:162.3px;width:84px;height:18.4px"></div>
<div class="t  k_zero" style="left:220.10px;top:164.00px;font-size:13px;">0.0</div>
<div class="cb" style="left:159.0999999999999px;top:116.2px"></div>
<div class="t  k_yes1" style="left:174.30px;top:114.00px;font-size:13px;letter-spacing:-0.550px;">Yes</div>
<div class="cb" style="left:159.0999999999999px;top:338.2px"></div>
<div class="t  k_yes2" style="left:174.30px;top:336.00px;font-size:13px;letter-spacing:-0.550px;">Yes</div>
<div class="cb" style="left:159.0999999999999px;top:388.2px"></div>
<div class="t  k_yes3" style="left:174.30px;top:386.00px;font-size:13px;letter-spacing:-0.550px;">Yes</div>
<svg class="abs" style="left:452px;top:80.8px" width="20" height="20" viewBox="0 0 20 20"><circle cx="10" cy="10" r="8.9" fill="#444"/><path d="M8.5 5.4L13.2 10L8.5 14.6" fill="none" stroke="#fff" stroke-width="1.6"/></svg>
<svg class="abs" style="left:452px;top:215.8px" width="20" height="20" viewBox="0 0 20 20"><circle cx="10" cy="10" r="8.9" fill="#444"/><path d="M8.5 5.4L13.2 10L8.5 14.6" fill="none" stroke="#fff" stroke-width="1.6"/></svg>
<svg class="abs" style="left:452px;top:272.1px" width="20" height="20" viewBox="0 0 20 20"><circle cx="10" cy="10" r="9" fill="#444"/><text transform="translate(10.2 15) scale(0.8 1)" text-anchor="middle" font-family="Liberation Sans, sans-serif" font-size="14" fill="#ededed" stroke="#ededed" stroke-width="0.4">?</text></svg>
<div class="abs" style="left:159.20000000000005px;top:273.2px;width:26.6px;height:18.6px;background:#e9e9e9;border:1px solid #7c7c7c;border-radius:1.3px;box-shadow:inset 1px 1px 0 #f8f8f8,0 1px 0 #f6f6f6"></div>
<svg class="abs" style="left:165.9000000000001px;top:276px" width="18" height="13" viewBox="0 0 18 13"><path d="M2.1 2.1H8V3.4H2.1Z" fill="#4a4a4a"/><path d="M2.1 3.2H13.6Q14.2 3.2 14.2 3.8V10.4" fill="none" stroke="#4a4a4a" stroke-width="1.15"/><path d="M0.1 5.3H12L13.2 10.8H1.3Z" fill="#4a4a4a"/></svg>
<div class="dd y" style="left:197.9000000000001px;top:273.2px;width:244.0999999999999px;height:18.4px"></div>
<div class="t  k_chozn" style="left:199.70px;top:275.00px;font-size:13px;letter-spacing:-0.300px;">CHOZn.ff</div>
<div class="abs" style="left:253.5999999999999px;top:275.6px;width:1.1px;height:13.6px;background:#111"></div>
<div class="abs" style="left:10.100000000000023px;top:727.2px;width:13.6px;height:13.6px;background:#fff;border:1px solid #c2c2c2;border-radius:3.2px;box-shadow:0 0.5px 0.5px rgba(0,0,0,.12)"></div>
<div class="t  k_show" style="left:29.20px;top:727.00px;font-size:13px;letter-spacing:-0.160px;">Show output</div>
<div class="pb" style="left:276.0999999999999px;top:721.1px;width:82.80000000000018px;height:25.6px"></div>
<div class="t  k_kill" style="left:308.00px;top:726.00px;font-size:13px;">Kill</div>
<div class="pb" style="left:379.0999999999999px;top:721.1px;width:84.70000000000005px;height:25.6px"></div>
<div class="t  k_preopt" style="left:384.00px;top:726.00px;font-size:13px;">Pre-optimize</div>
<svg class="abs" style="left:469px;top:765px" width="10" height="10" viewBox="0 0 10 10"><path d="M10 5.5Q9.6 9.6 5.5 10H10Z" fill="#4b4a9c"/></svg>
</div>
</body></html>
